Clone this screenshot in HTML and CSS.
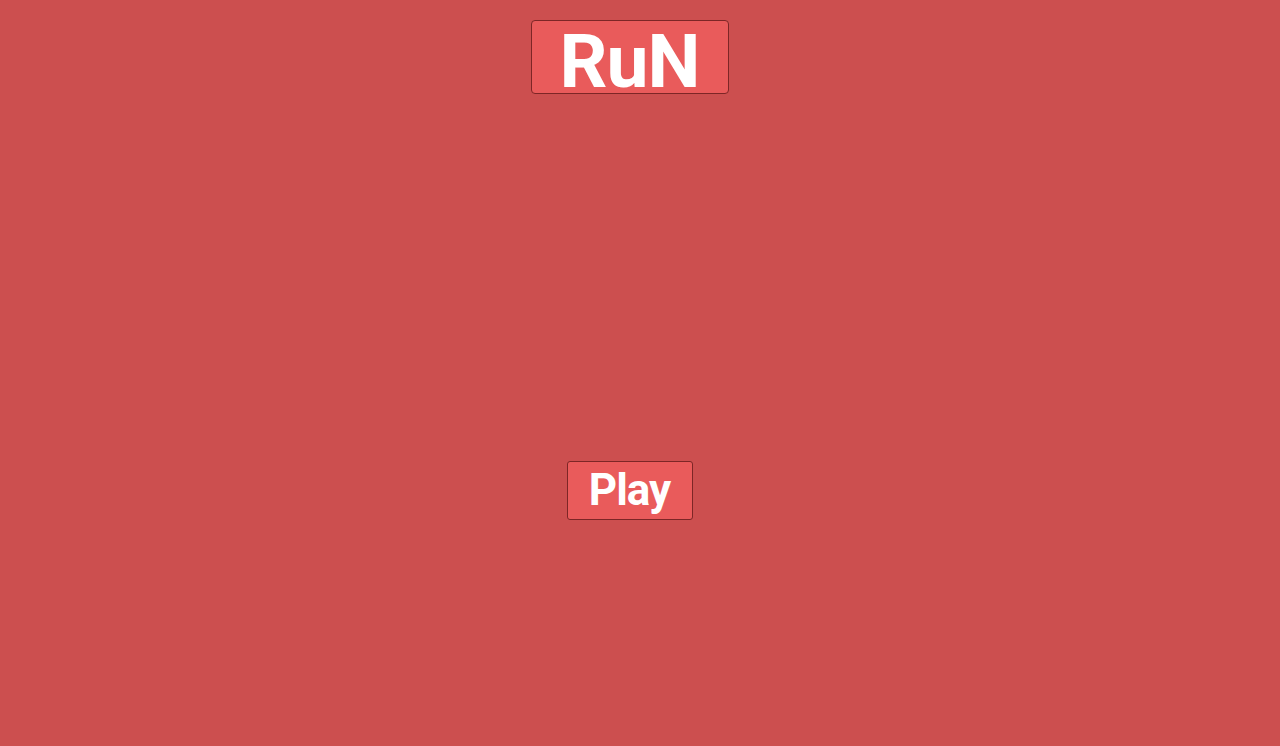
FILE: index.html
```html
<!DOCTYPE html>
<html>
<head>
<meta charset="utf-8">
<link rel="stylesheet" href="styles.css">
</head>
<body>
<div class="screen">
  <div class="title">RuN</div>
  <button class="play">Play</button>
</div>
</body>
</html>
```
FILE: styles.css
```css
html, body {
  margin: 0;
  padding: 0;
  height: 100%;
  background: #cc4f4f;
}
.screen {
  display: flex;
  flex-direction: column;
  align-items: center;
  padding: 20px 21px 0 0;
  font-family: Roboto, "Liberation Sans", sans-serif;
}
.title {
  box-sizing: border-box;
  width: 198px;
  height: 74px;
  padding-top: 7px;
  background: #e95b5b;
  border: 1px solid #7d2626;
  border-radius: 4px;
  color: #fff;
  font-weight: 700;
  font-size: 75px;
  line-height: 66px;
  letter-spacing: -1px;
  text-align: center;
}
.play {
  box-sizing: border-box;
  margin-top: 367px;
  width: 126px;
  height: 59px;
  background: #e95b5b;
  border: 1px solid #7d2626;
  border-radius: 3px;
  color: #fff;
  font-family: Roboto, "Liberation Sans", sans-serif;
  font-weight: 700;
  font-size: 44px;
  line-height: 55px;
  letter-spacing: -1px;
  padding: 0;
  text-align: center;
}
```
